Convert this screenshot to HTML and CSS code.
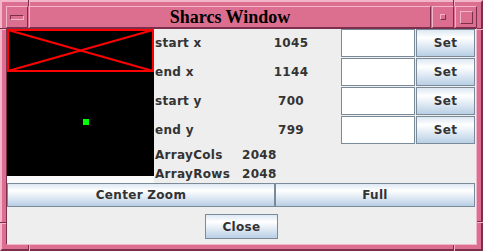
FILE: index.html
```html
<!DOCTYPE html>
<html lang="en">
<head>
	<meta charset="UTF-8">
	<title>Sharcs Window</title>
	<link rel="stylesheet" href="styles.css">
</head>
<body>
	<div class="window">
		<!-- resize handle marks on the frame -->
		<span class="notch v" style="left:26px;top:-2px"></span>
		<span class="notch v" style="left:451px;top:-2px"></span>
		<span class="notch v" style="left:26px;bottom:-2px"></span>
		<span class="notch v" style="left:451px;bottom:-2px"></span>
		<span class="notch h" style="top:26px;left:-2px"></span>
		<span class="notch h" style="top:26px;right:-2px"></span>
		<span class="notch h" style="top:220px;left:-2px"></span>
		<span class="notch h" style="top:219px;right:-2px"></span>

		<div class="titlebar">
			<div class="tb-btn"><span class="menu-icon"></span></div>
			<div class="title">Sharcs Window</div>
			<div class="tb-btn"><span class="min-icon"></span></div>
			<div class="tb-btn"><span class="max-icon"></span></div>
		</div>

		<div class="content">
			<div class="top">
				<div class="view">
					<svg width="147" height="147" viewBox="0 0 147 147">
						<rect x="0" y="0" width="147" height="147" fill="#000"/>
						<rect x="1" y="1" width="145" height="41" fill="none" stroke="#ff0000" stroke-width="2"/>
						<line x1="1" y1="1" x2="146" y2="42" stroke="#ff0000" stroke-width="2"/>
						<line x1="1" y1="42" x2="146" y2="1" stroke="#ff0000" stroke-width="2"/>
						<rect x="76" y="90" width="6" height="6" fill="#00ff00"/>
					</svg>
				</div>
				<div class="controls">
					<div class="row">
						<span class="label">start x</span>
						<span class="value">1045</span>
						<div class="field"></div>
						<button class="btn set">Set</button>
					</div>
					<div class="row">
						<span class="label">end x</span>
						<span class="value">1144</span>
						<div class="field"></div>
						<button class="btn set">Set</button>
					</div>
					<div class="row">
						<span class="label">start y</span>
						<span class="value">700</span>
						<div class="field"></div>
						<button class="btn set">Set</button>
					</div>
					<div class="row">
						<span class="label">end y</span>
						<span class="value">799</span>
						<div class="field"></div>
						<button class="btn set">Set</button>
					</div>
					<div class="info"><span class="ilabel">ArrayCols</span><span>2048</span></div>
					<div class="info"><span class="ilabel">ArrayRows</span><span>2048</span></div>
				</div>
			</div>
			<div class="zoom-row">
				<button class="btn center">Center Zoom</button>
				<button class="btn full">Full</button>
			</div>
			<div class="close-row">
				<button class="btn close">Close</button>
			</div>
		</div>
	</div>
</body>
</html>
```

FILE: styles.css
```css
*{
	margin: 0;
	padding: 0;
	box-sizing: border-box;
}
body{
	width: 483px;
	height: 251px;
	font-family: "DejaVu Sans", sans-serif;
}
.window{
	position: relative;
	width: 483px;
	height: 251px;
	background: #dc6f8f;
	border: 2px solid;
	border-color: #f3b5c9 #7c2f4d #7c2f4d #f3b5c9;
	padding: 4px;
	display: flex;
	flex-direction: column;
}
.notch{
	position: absolute;
}
.notch.v{
	width: 2px;
	height: 6px;
	border-left: 1px solid #7c2f4d;
	border-right: 1px solid #f3b5c9;
}
.notch.h{
	width: 6px;
	height: 2px;
	border-top: 1px solid #7c2f4d;
	border-bottom: 1px solid #f3b5c9;
}
.titlebar{
	display: flex;
	gap: 1px;
	height: 22px;
}
.tb-btn{
	width: 22px;
	border: 1px solid;
	border-color: #f3b5c9 #7c2f4d #7c2f4d #f3b5c9;
	display: flex;
	align-items: center;
	justify-content: center;
}
.menu-icon{
	width: 14px;
	height: 5px;
	border: 1px solid;
	border-color: #7c2f4d #f3b5c9 #f3b5c9 #7c2f4d;
}
.min-icon{
	width: 6px;
	height: 6px;
	border: 1px solid;
	border-color: #f3b5c9 #7c2f4d #7c2f4d #f3b5c9;
}
.max-icon{
	width: 13px;
	height: 13px;
	border: 1px solid;
	border-color: #f3b5c9 #7c2f4d #7c2f4d #f3b5c9;
}
.title{
	flex: 1;
	border: 1px solid;
	border-color: #f3b5c9 #7c2f4d #7c2f4d #f3b5c9;
	font: bold 18px "Liberation Serif", serif;
	color: #000;
	text-align: center;
	line-height: 20px;
}
.content{
	flex: 1;
	background: #eeeeee;
	border: 1px solid;
	border-color: #7c2f4d #f3b5c9 #f3b5c9 #7c2f4d;
	display: flex;
	flex-direction: column;
	font-size: 12px;
	font-weight: bold;
	letter-spacing: 0.3px;
	color: #333333;
}
.top{
	display: flex;
	gap: 1px;
	height: 154px;
}
.view{
	width: 147px;
	background: #fafafa;
}
.view svg{
	display: block;
}
.controls{
	flex: 1;
	display: flex;
	flex-direction: column;
}
.row{
	display: flex;
	height: 29px;
	padding-bottom: 1px;
	align-items: center;
}
.label{
	width: 100px;
}
.value{
	width: 72px;
	text-align: center;
}
.field{
	width: 74px;
	height: 28px;
	margin-left: 14px;
	margin-right: 1px;
	background: #fff;
	border: 1px solid #7a8a99;
}
.info{
	display: flex;
	height: 19px;
	align-items: center;
}
.ilabel{
	width: 87px;
}
.btn{
	font-family: "DejaVu Sans", sans-serif;
	font-size: 12px;
	font-weight: bold;
	letter-spacing: 0.3px;
	color: #333333;
	border: 1px solid #7a8a99;
	background: linear-gradient(#dde8f3, #ffffff 30%, #b8cfe5);
}
.set{
	width: 59px;
	height: 28px;
}
.zoom-row{
	display: flex;
	height: 24px;
}
.center{
	width: 268px;
}
.full{
	width: 200px;
}
.close-row{
	display: flex;
	justify-content: center;
	padding-top: 7px;
}
.close{
	width: 73px;
	height: 25px;
}
```
